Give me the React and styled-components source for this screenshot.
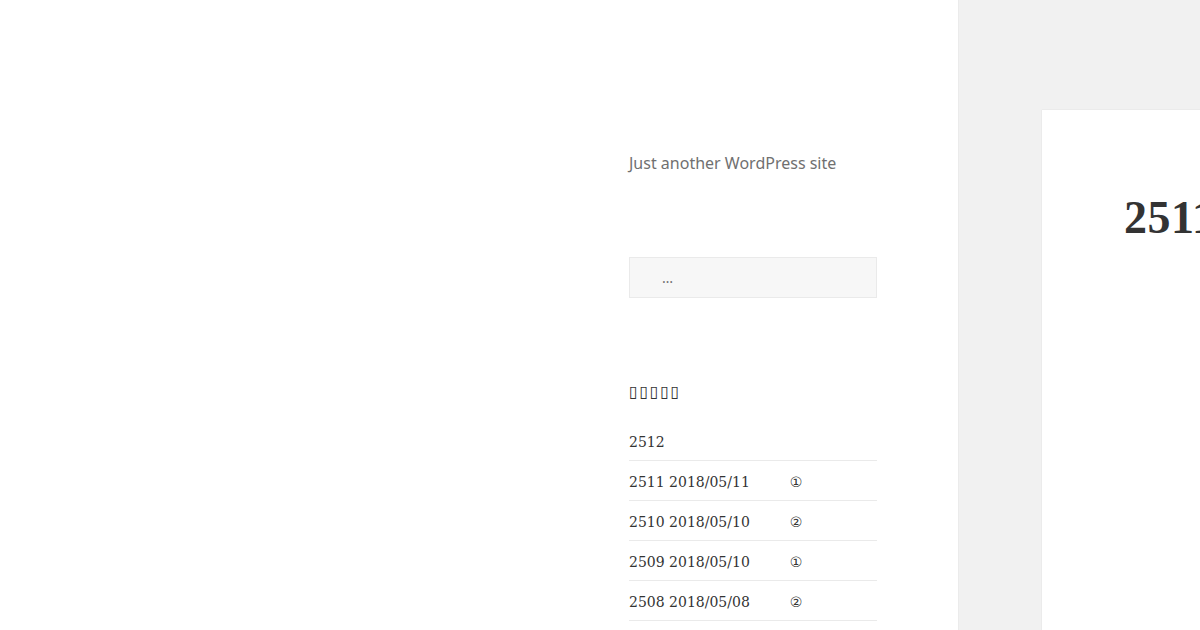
import React from 'react';
import styled, { createGlobalStyle } from 'styled-components';

const GlobalStyle = createGlobalStyle`
	html, body {
		margin: 0;
		padding: 0;
		background: #f1f1f1;
	}
	body {
		font-family: "DejaVu Serif", "Liberation Serif", serif;
		color: #333;
		overflow: hidden;
	}
`;

const Page = styled.div`
	display: flex;
	width: 1200px;
	height: 630px;
	overflow: hidden;
`;

const Sidebar = styled.aside`
	flex: 0 0 958px;
	background: #fff;
	box-shadow: 0 0 1px rgba(0, 0, 0, 0.15);
	padding-left: 629px;
	box-sizing: border-box;
	position: relative;
	z-index: 1;
`;

const SidebarInner = styled.div`
	width: 248px;
	padding-top: 151px;
`;

const Tagline = styled.p`
	margin: 0;
	font-family: "Noto Sans", "Open Sans", sans-serif;
	font-size: 16px;
	line-height: 24px;
	color: #707070;
`;

const SearchField = styled.input`
	display: block;
	margin-top: 82px;
	width: 248px;
	height: 41px;
	box-sizing: border-box;
	background: #f7f7f7;
	border: 1px solid #eaeaea;
	padding: 0 0 0 32px;
	font-family: "Noto Sans", sans-serif;
	font-size: 14px;
	color: #333;
	outline: none;

	&::placeholder {
		color: #707070;
	}
`;

const WidgetTitle = styled.h2`
	margin: 82px 0 17px;
	font-family: "DejaVu Sans", sans-serif;
	font-weight: 400;
	font-size: 16px;
	line-height: 24px;
	letter-spacing: 1.6px;
	color: #333;
`;

const PostList = styled.ul`
	list-style: none;
	margin: 0;
	padding: 0;
`;

const PostItem = styled.li`
	font-size: 14px;
	line-height: 23px;
	padding: 10px 0 6px;
	border-bottom: 1px solid rgba(51, 51, 51, 0.1);
`;

const Mark = styled.span`
	margin-left: 40px;
	font-family: "DejaVu Sans", sans-serif;
	font-size: 14px;
`;

const Main = styled.main`
	flex: 1;
	padding: 110px 0 0 84px;
	min-width: 0;
`;

const Card = styled.article`
	background: #fff;
	box-shadow: 0 0 1px rgba(0, 0, 0, 0.15);
	height: 600px;
	padding: 85px 0 0 82px;
	box-sizing: border-box;
	white-space: nowrap;
`;

const EntryTitle = styled.h1`
	margin: 0;
	font-family: "Liberation Serif", "DejaVu Serif", serif;
	font-size: 46px;
	font-weight: 700;
	line-height: 1;
	letter-spacing: 0.5px;
	color: #333;
`;

const posts = [
	{ id: '2512' },
	{ id: '2511', date: '2018/05/11', mark: '①' },
	{ id: '2510', date: '2018/05/10', mark: '②' },
	{ id: '2509', date: '2018/05/10', mark: '①' },
	{ id: '2508', date: '2018/05/08', mark: '②' },
];

const App = () => {
	return (
		<>
			<GlobalStyle />
			<Page>
				<Sidebar>
					<SidebarInner>
						<Tagline>Just another WordPress site</Tagline>
						<SearchField type="search" placeholder="…" />
						<WidgetTitle>▯▯▯▯▯</WidgetTitle>
						<PostList>
							{posts.map((p) => (
								<PostItem key={p.id}>
									{p.id}
									{p.date && ` ${p.date}`}
									{p.mark && <Mark>{p.mark}</Mark>}
								</PostItem>
							))}
						</PostList>
					</SidebarInner>
				</Sidebar>
				<Main>
					<Card>
						<EntryTitle>2511</EntryTitle>
					</Card>
				</Main>
			</Page>
		</>
	);
};

export default App;
